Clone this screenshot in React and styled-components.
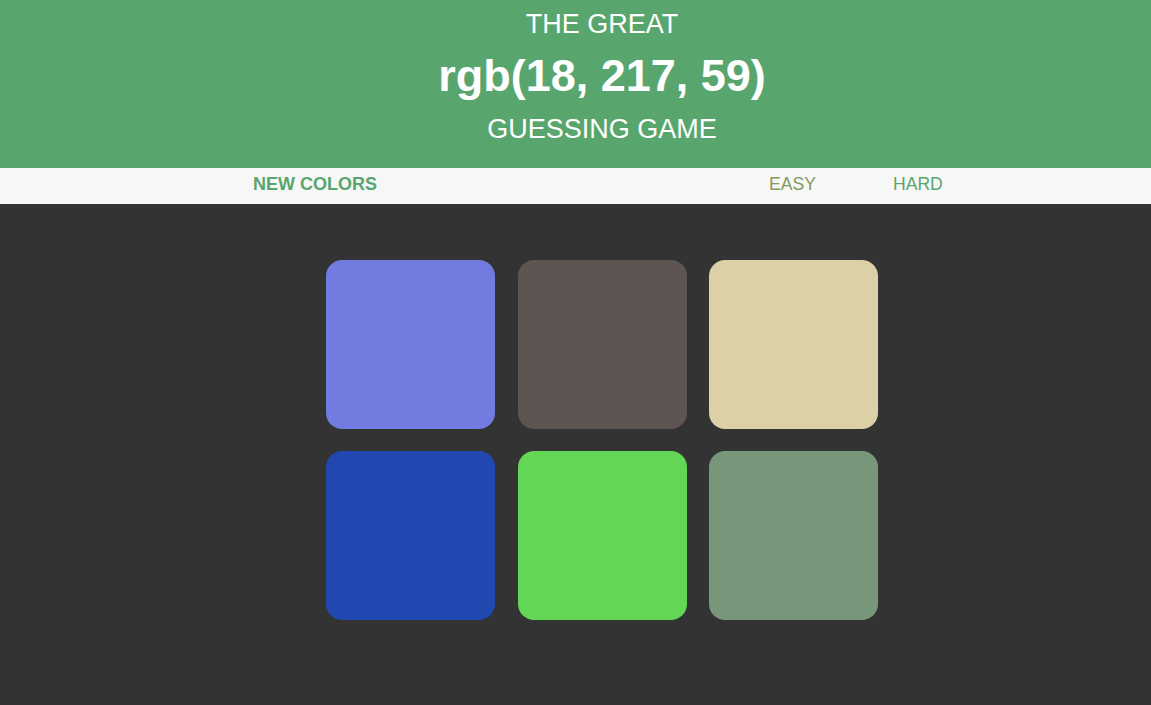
import React from 'react'
import styled, { createGlobalStyle } from 'styled-components'

const GlobalStyle = createGlobalStyle`
  body {
    margin: 0;
    background: #333333;
    font-family: 'Liberation Sans', Arial, sans-serif;
    overflow: hidden;
  }
`

const Page = styled.div`
  width: 1204px;
  min-height: 705px;
  background: #333333;
`

const Header = styled.h1`
  margin: 0;
  padding: 0 0 11px;
  background: #58a66d;
  color: #ffffff;
  text-align: center;
  font-weight: normal;
`

const Line = styled.span`
  display: block;
  font-size: ${props => (props.big ? '45px' : '27px')};
  font-weight: ${props => (props.big ? 'bold' : 'normal')};
  line-height: ${props => props.lh}px;
  text-transform: ${props => (props.big ? 'none' : 'uppercase')};
`

const Stripe = styled.div`
  display: flex;
  align-items: center;
  box-sizing: border-box;
  height: 36px;
  padding: 0 0 3px 253px;
  background: #f7f7f7;
`

const StripeButton = styled.button`
  border: none;
  background: none;
  padding: 0;
  margin-left: ${props => props.offset || 0}px;
  font-family: inherit;
  font-size: ${props => (props.bold ? '18px' : '17.6px')};
  font-weight: ${props => (props.bold ? 'bold' : 'normal')};
  color: ${props => props.tint || '#58a66d'};
  text-transform: uppercase;
  cursor: pointer;
`

const Board = styled.div`
  display: grid;
  grid-template-columns: repeat(3, 1fr);
  grid-auto-rows: 169px;
  column-gap: 22.5px;
  row-gap: 22px;
  width: 552px;
  margin: 56px auto 0;
`

const Square = styled.div`
  background: ${props => props.color};
  border-radius: 16px;
`

const colors = [
  'rgb(113, 123, 224)',
  'rgb(94, 84, 81)',
  'rgb(219, 208, 166)',
  'rgb(32, 72, 176)',
  'rgb(99, 214, 86)',
  'rgb(120, 150, 122)'
]

const App = () => {
  return (
    <Page>
      <GlobalStyle />
      <Header>
        <Line lh={49}>The Great</Line>
        <Line big lh={53}>rgb(18, 217, 59)</Line>
        <Line lh={55}>Guessing Game</Line>
      </Header>
      <Stripe>
        <StripeButton bold>New Colors</StripeButton>
        <StripeButton offset={392} tint="#7f9c5f">Easy</StripeButton>
        <StripeButton offset={77}>Hard</StripeButton>
      </Stripe>
      <Board>
        {colors.map(c => (
          <Square key={c} color={c} />
        ))}
      </Board>
    </Page>
  )
}

export default App
